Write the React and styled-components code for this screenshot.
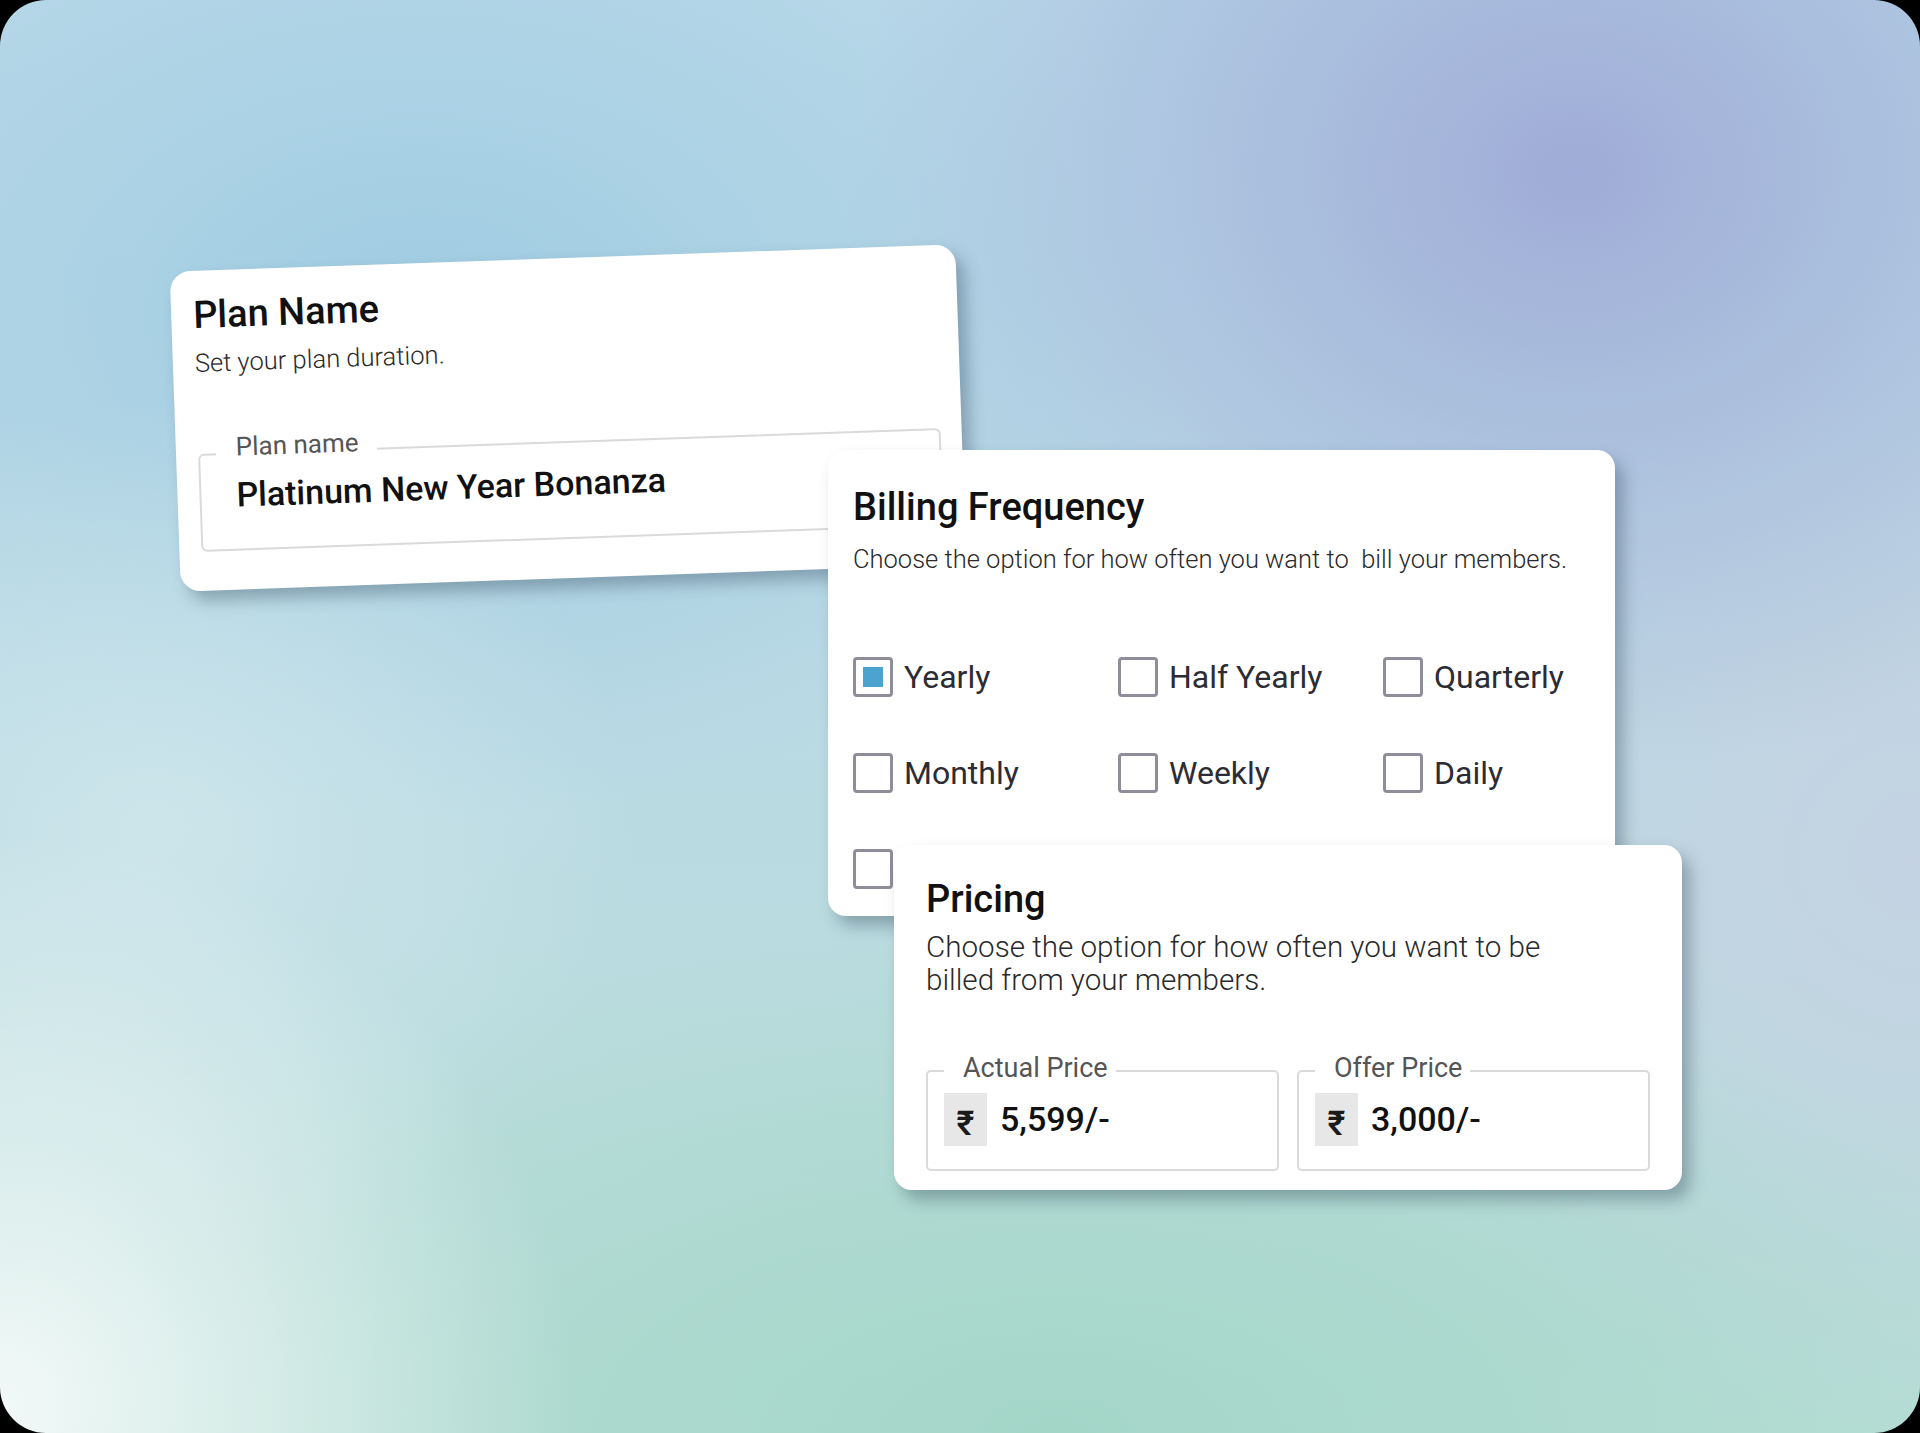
import React from 'react';
import styled, { createGlobalStyle } from 'styled-components';

const Global = createGlobalStyle`
  html, body { margin: 0; padding: 0; background: #000; }
  body { font-family: Roboto, "Noto Sans", "DejaVu Sans", sans-serif; }
  * { box-sizing: border-box; }
`;

const Canvas = styled.div`
  position: relative;
  width: 1920px;
  height: 1433px;
  border-radius: 46px;
  overflow: hidden;
  background:
    radial-gradient(ellipse 38% 42% at 82% 12%, rgba(158, 170, 214, 0.95), rgba(158, 170, 214, 0) 100%),
    radial-gradient(ellipse 30% 40% at 0% 98%, rgba(242, 249, 248, 1), rgba(242, 249, 248, 0) 100%),
    radial-gradient(ellipse 25% 30% at 8% 58%, rgba(206, 230, 236, 0.9), rgba(206, 230, 236, 0) 100%),
    radial-gradient(ellipse 55% 35% at 55% 100%, rgba(164, 214, 200, 1), rgba(164, 214, 200, 0) 100%),
    radial-gradient(ellipse 40% 35% at 22% 22%, rgba(160, 204, 226, 1), rgba(160, 204, 226, 0) 100%),
    radial-gradient(ellipse 30% 40% at 100% 60%, rgba(196, 210, 226, 1), rgba(196, 210, 226, 0) 100%),
    linear-gradient(180deg, #b9d9e9 0%, #bbdae4 50%, #b8ded6 100%);
`;

const Card = styled.section`
  position: absolute;
  left: ${(p) => p.$x}px;
  top: ${(p) => p.$y}px;
  width: ${(p) => p.$w}px;
  height: ${(p) => p.$h}px;
  padding: ${(p) => p.$pad};
  background: #fff;
  border-radius: ${(p) => p.$r}px;
  transform: rotate(${(p) => p.$rot || 0}deg);
  box-shadow: 8px 10px 16px rgba(40, 60, 80, 0.35);
  overflow: hidden;
`;

const Title = styled.h2`
  margin: 0;
  font-size: 38px;
  line-height: 44px;
  font-weight: 500;
  color: #111;
`;

const Subtitle = styled.p`
  margin: ${(p) => p.$mt}px 0 0 0;
  font-size: ${(p) => p.$size}px;
  line-height: ${(p) => p.$lh}px;
  font-weight: 300;
  color: #2a2a2a;
  white-space: pre-wrap;
  max-width: ${(p) => p.$maxw || 'none'};
`;

const Outlined = styled.div`
  position: relative;
  height: ${(p) => p.$h}px;
  margin-top: ${(p) => p.$mt || 0}px;
  border: 2px solid #dadada;
  border-radius: 6px;
`;

const FloatLabel = styled.span`
  position: absolute;
  left: 16px;
  top: ${(p) => p.$top}px;
  padding: ${(p) => p.$pad};
  background: #fff;
  font-size: ${(p) => p.$size}px;
  line-height: 28px;
  color: #555;
  font-weight: 400;
`;

const PlanValue = styled.div`
  padding: 20px 0 0 35px;
  font-size: 34px;
  line-height: 40px;
  font-weight: 500;
  color: #111;
`;

const CheckGrid = styled.div`
  display: grid;
  grid-template-columns: repeat(3, 265px);
  row-gap: 56px;
  margin-top: 84px;
`;

const CheckItem = styled.label`
  display: flex;
  align-items: center;
  gap: 11px;
  font-size: 32px;
  line-height: 40px;
  color: #2c2c34;
`;

const Box = styled.span`
  width: 40px;
  height: 40px;
  flex: none;
  display: flex;
  align-items: center;
  justify-content: center;
  border: 3px solid #8f8d9a;
  border-radius: 4px;
  background: #fff;
`;

const Fill = styled.span`
  width: 20px;
  height: 20px;
  background: #4ca3cf;
`;

const PriceRow = styled.div`
  display: grid;
  grid-template-columns: 1fr 1fr;
  column-gap: 18px;
  margin-top: 73px;
`;

const PriceBox = styled(Outlined)`
  display: flex;
  align-items: center;
  padding-left: 16px;
  border-radius: 5px;
`;

const Rupee = styled.span`
  width: 43px;
  height: 53px;
  margin-top: -2px;
  display: flex;
  align-items: center;
  justify-content: center;
  background: #e7e7e7;
  font-size: 34px;
  font-weight: 600;
  color: #1a1a1a;
  padding-top: 6px;
`;

const PriceValue = styled.span`
  margin-left: 13px;
  margin-bottom: 4px;
  font-size: 34px;
  line-height: 42px;
  font-weight: 500;
  color: #111;
`;

const options = [
  { label: 'Yearly', checked: true },
  { label: 'Half Yearly' },
  { label: 'Quarterly' },
  { label: 'Monthly' },
  { label: 'Weekly' },
  { label: 'Daily' },
  { label: '' },
];

export default function App() {
  return (
    <>
      <Global />
      <Canvas>
        <Card $x={175} $y={258} $w={786} $h={320} $r={20} $rot={-2} $pad="22px 21px 0 22px">
          <Title>Plan Name</Title>
          <Subtitle $mt={12} $size={25.5} $lh={28}>Set your plan duration.</Subtitle>
          <Outlined $h={98} $mt={77}>
            <FloatLabel $size={26} $top={-22} $pad="0 18px 0 20px">Plan name</FloatLabel>
            <PlanValue>Platinum New Year Bonanza</PlanValue>
          </Outlined>
        </Card>

        <Card $x={828} $y={450} $w={787} $h={466} $r={18} $pad="35px 25px 0 25px">
          <Title>Billing Frequency</Title>
          <Subtitle $mt={16} $size={25.5} $lh={28}>
            {'Choose the option for how often you want to  bill your members.'}
          </Subtitle>
          <CheckGrid>
            {options.map((o, i) => (
              <CheckItem key={i}>
                <Box>{o.checked && <Fill />}</Box>
                {o.label}
              </CheckItem>
            ))}
          </CheckGrid>
        </Card>

        <Card $x={894} $y={845} $w={788} $h={345} $r={18} $pad="32px 32px 0 32px">
          <Title>Pricing</Title>
          <Subtitle $mt={10} $size={29.6} $lh={33} $maxw="660px">
            Choose the option for how often you want to be billed from your members.
          </Subtitle>
          <PriceRow>
            <PriceBox $h={101}>
              <FloatLabel $size={27} $top={-18} $pad="0 8px 0 19px">Actual Price</FloatLabel>
              <Rupee>₹</Rupee>
              <PriceValue>5,599/-</PriceValue>
            </PriceBox>
            <PriceBox $h={101}>
              <FloatLabel $size={27} $top={-18} $pad="0 8px 0 19px">Offer Price</FloatLabel>
              <Rupee>₹</Rupee>
              <PriceValue>3,000/-</PriceValue>
            </PriceBox>
          </PriceRow>
        </Card>
      </Canvas>
    </>
  );
}
